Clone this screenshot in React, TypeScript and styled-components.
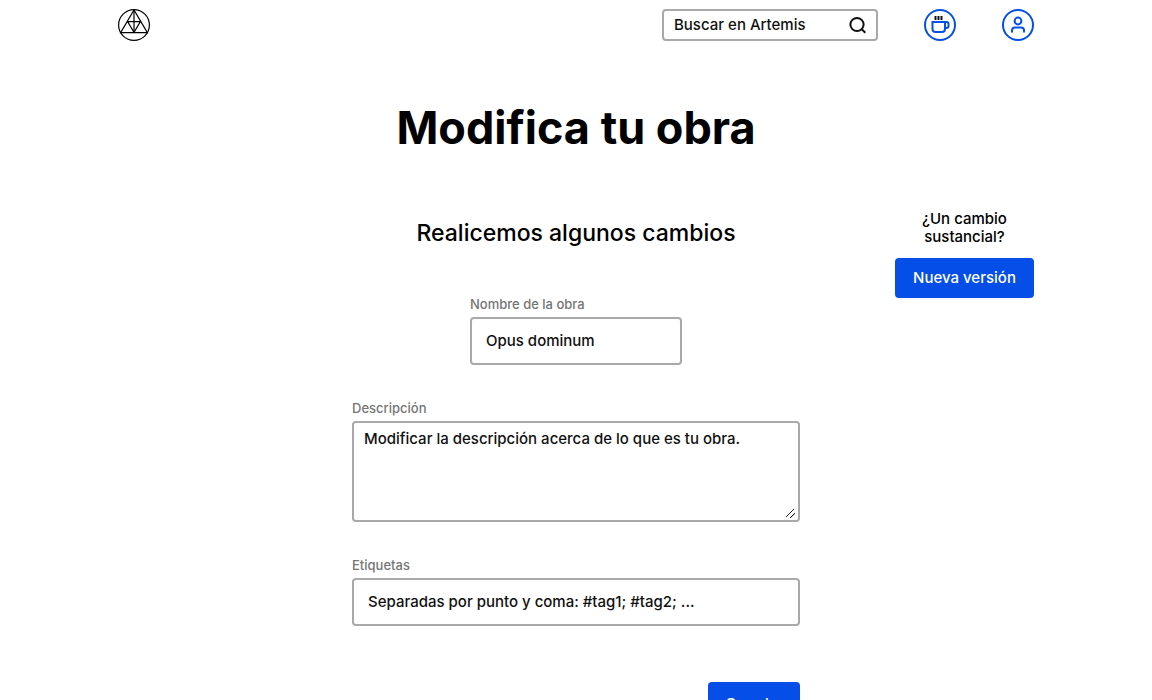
import React from 'react';
import styled, { createGlobalStyle } from 'styled-components';

const GlobalStyle = createGlobalStyle`
  *, *::before, *::after { box-sizing: border-box; }
  body {
    margin: 0;
    background: #fff;
    color: #000;
    font: 500 15px/18px Inter, "Liberation Sans", sans-serif;
  }
  input, textarea, button { font: inherit; }
`;

const Header = styled.header`
  display: flex;
  align-items: center;
  justify-content: space-between;
  height: 50px;
  padding: 0 118px;
`;

const LogoLink = styled.a`
  display: flex;
  color: #000;
`;

const Actions = styled.nav`
  display: flex;
  align-items: center;
  gap: 46px;
`;

const SearchBox = styled.form`
  display: flex;
  align-items: center;
  width: 216px;
  height: 32px;
  padding: 0 10px;
  border: 2px solid #a9a9a9;
  border-radius: 4px;
`;

const SearchInput = styled.input`
  flex: 1;
  min-width: 0;
  padding: 0;
  border: 0;
  outline: 0;
  background: none;
  color: #111;
  &::placeholder { color: #111; opacity: 1; }
`;

const SearchButton = styled.button`
  display: flex;
  padding: 0;
  border: 0;
  background: none;
  color: #111;
`;

const RoundLink = styled.a`
  display: flex;
  color: #054fe8;
`;

const Title = styled.h1`
  margin: 50px 0 54px;
  text-align: center;
  font-size: 45px;
  line-height: 56px;
  font-weight: 700;
`;

const Content = styled.main`
  display: grid;
  grid-template-columns: 1fr 448px 1fr;
  padding: 0 118px;
`;

const EditForm = styled.form`
  grid-column: 2;
  display: flex;
  flex-direction: column;
  align-items: center;
  padding-top: 9px;
`;

const Subtitle = styled.h2`
  margin: 0 0 48px;
  font-size: 23px;
  line-height: 28px;
  font-weight: 500;
`;

const Field = styled.div<{ $narrow?: boolean }>`
  display: flex;
  flex-direction: column;
  gap: 4px;
  width: ${(p) => (p.$narrow ? '212px' : '100%')};
  margin-bottom: 34px;
`;

const Label = styled.label`
  color: #757575;
  font-size: 13px;
  line-height: 18px;
`;

const TextInput = styled.input`
  width: 100%;
  height: 48px;
  padding: 0 14px 2px;
  border: 2px solid #a9a9a9;
  border-radius: 4px;
  background: #fff;
  color: #111;
  &::placeholder { color: #111; opacity: 1; }
`;

const TextArea = styled.textarea`
  display: block;
  width: 100%;
  height: 101px;
  padding: 7px 10px;
  border: 2px solid #a9a9a9;
  border-radius: 4px;
  background: #fff;
  color: #111;
  resize: vertical;
  &::placeholder { color: #111; opacity: 1; }
  &::-webkit-resizer {
    background: linear-gradient(135deg,
      transparent 40%, #222 41%, #222 49%, transparent 50%,
      transparent 68%, #222 69%, #222 77%, transparent 78%)
      3px 4px / 9px 9px no-repeat;
  }
`;

const Button = styled.button<{ $large?: boolean }>`
  height: ${(p) => (p.$large ? '44px' : '40px')};
  padding: 0 17px;
  border: 0;
  border-radius: 4px;
  background: #054fe8;
  color: #fff;
`;

const FormFooter = styled.div`
  display: flex;
  justify-content: flex-end;
  width: 100%;
  padding: 22px 0 32px;
`;

const Aside = styled.aside`
  display: flex;
  flex-direction: column;
  justify-self: end;
  align-self: start;
  gap: 12px;
  width: 139px;
  text-align: center;
`;

const AsideText = styled.p`
  margin: 0;
  padding: 0 16px;
`;

const Logo = () => (
  <svg width="32" height="32" viewBox="0 0 32 32" fill="none" stroke="currentColor" strokeWidth="1.2">
    <circle cx="16" cy="16" r="15.4" />
    <path d="M16 1 2.6 23.6h26.8ZM9.6 12.6h12.8L16 23.4Z" />
    <path d="M16 1v22.6" strokeWidth="2" strokeOpacity="0.6" />
  </svg>
);

const SearchIcon = () => (
  <svg width="18" height="18" viewBox="0 0 18 18" fill="none" stroke="currentColor" strokeWidth="2">
    <circle cx="9" cy="8.5" r="6.6" />
    <path d="m13.5 13 3.8 3.8" />
  </svg>
);

const CupIcon = () => (
  <svg width="32" height="32" viewBox="0 0 32 32" fill="none" stroke="currentColor" strokeWidth="2">
    <circle cx="16" cy="16" r="15" />
    <path d="M8.5 13h12.5v7a3 3 0 0 1-3 3h-6.5a3 3 0 0 1-3-3ZM21 13h1.5a2 2 0 0 1 2 2v2a2 2 0 0 1-2 2h-1.5" />
    <path d="M11.5 7v4M14.5 7v4M17.5 7v4" stroke="#111" />
  </svg>
);

const UserIcon = () => (
  <svg width="32" height="32" viewBox="0 0 32 32" fill="none" stroke="currentColor" strokeWidth="2">
    <circle cx="16" cy="16" r="15" />
    <circle cx="16" cy="12" r="3.4" />
    <path d="M10 23.5v-2a3 3 0 0 1 3-3h6a3 3 0 0 1 3 3v2" />
  </svg>
);

export default function App() {
  return (
    <>
      <GlobalStyle />
      <Header>
        <LogoLink href="#" aria-label="Artemis"><Logo /></LogoLink>
        <Actions>
          <SearchBox role="search">
            <SearchInput type="search" placeholder="Buscar en Artemis" aria-label="Buscar en Artemis" />
            <SearchButton type="button" aria-label="Buscar"><SearchIcon /></SearchButton>
          </SearchBox>
          <RoundLink href="#" aria-label="Invitar un café"><CupIcon /></RoundLink>
          <RoundLink href="#" aria-label="Perfil"><UserIcon /></RoundLink>
        </Actions>
      </Header>
      <Title>Modifica tu obra</Title>
      <Content>
        <EditForm>
          <Subtitle>Realicemos algunos cambios</Subtitle>
          <Field $narrow>
            <Label htmlFor="name">Nombre de la obra</Label>
            <TextInput id="name" type="text" placeholder="Opus dominum" />
          </Field>
          <Field>
            <Label htmlFor="description">Descripción</Label>
            <TextArea id="description" placeholder="Modificar la descripción acerca de lo que es tu obra." />
          </Field>
          <Field>
            <Label htmlFor="tags">Etiquetas</Label>
            <TextInput id="tags" type="text" placeholder="Separadas por punto y coma: #tag1; #tag2; ..." />
          </Field>
          <FormFooter>
            <Button type="button" $large>Guardar</Button>
          </FormFooter>
        </EditForm>
        <Aside>
          <AsideText>¿Un cambio sustancial?</AsideText>
          <Button type="button">Nueva versión</Button>
        </Aside>
      </Content>
    </>
  );
}
